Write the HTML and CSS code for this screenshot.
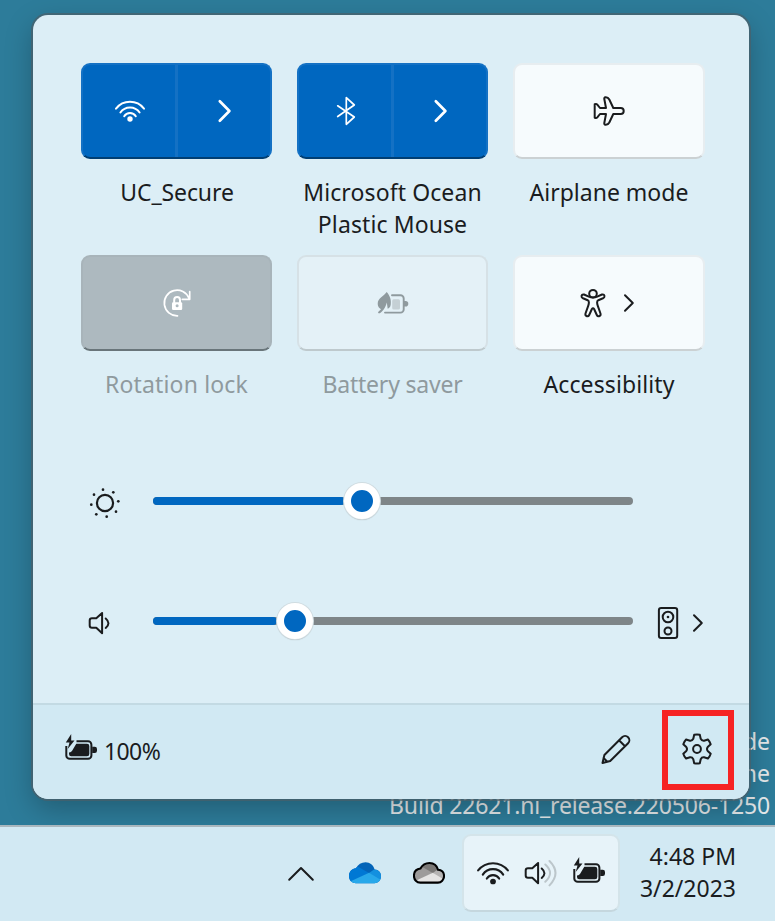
FILE: index.html
```html
<!DOCTYPE html>
<html lang="en">
<head>
<meta charset="utf-8">
<title>Quick settings</title>
<link rel="stylesheet" href="styles.css">
</head>
<body>
<svg width="0" height="0" class="defs" aria-hidden="true">
  <symbol id="wifi" viewBox="0 0 32 24"><g fill="none" stroke="currentColor" stroke-width="2" stroke-linecap="round"><path d="M2 9.6a17.8 17.8 0 0 1 28 0"/><path d="M6.400 13.500a11.600 11.600 0 0 1 19.200 0"/><path d="M10.200 17.200a6.900 6.900 0 0 1 11.600 0"/></g><circle cx="16" cy="20" r="2.700" fill="currentColor"/></symbol>
  <symbol id="battery" viewBox="0 0 34 32"><path d="M12.500 8.300h11.500a3.400 3.400 0 0 1 3.400 3.400v10.700a3.400 3.400 0 0 1-3.400 3.400H5.700a3.400 3.400 0 0 1-3.400-3.400V13" fill="none" stroke="currentColor" stroke-width="2"/><path d="M12.300 10.700H23a2.300 2.300 0 0 1 2.300 2.300v8a2.300 2.300 0 0 1-2.300 2.300H7.200a2.300 2.300 0 0 1-2.200-2.300v-1.500q2.800-.2 4.300-3.700zM7.200 1L1.800 9.600h3.700L3.700 16l6.800-8.600H7.200zM28.200 13.800h2.600a2.200 2.200 0 0 1 2.200 2.200v1.800a2.200 2.200 0 0 1-2.200 2.200h-2.600z" fill="currentColor"/></symbol>
</svg>
<main class="desktop">
  <div class="watermark"><span>de</span><span>ne</span><span class="build">Build 22621.ni_release.220506-1250</span></div>
  <section class="panel">
    <div class="content">
      <div class="tiles">
        <div class="item">
          <div class="tile split"><span><svg width="32" height="24"><use href="#wifi"/></svg></span><span><svg class="bold-chevron" width="16" height="24" viewBox="0 0 16 24"><path d="M3.800 2.300L13.400 12l-9.600 9.700"/></svg></span></div>
          <p class="t-wifi">UC_Secure</p>
        </div>
        <div class="item">
          <div class="tile split"><span><svg class="line thin" width="32" height="32" viewBox="0 0 32 32"><path d="M7.700 10.800L24.300 22l-8 7.300V2.700l8 7.300L7.700 21.500"/></svg></span><span><svg class="bold-chevron" width="16" height="24" viewBox="0 0 16 24"><path d="M3.800 2.300L13.400 12l-9.600 9.700"/></svg></span></div>
          <p class="t-bt">Microsoft Ocean<br>Plastic Mouse</p>
        </div>
        <div class="item">
          <div class="tile light"><svg class="line plane" width="34" height="32" viewBox="0 0 34 32"><path d="M28.700 13a3 3 0 0 1 0 6h-7.400l-4 8.500q-1.300 2.500-3.800 2.300-1.500-.3-1.200-1.800l1.700-9H8l-2.700 3.400q-.8.900-2.600.4V9.200q1.800-.5 2.600.4L8 13h6l-1.700-9q-.3-1.500 1.200-1.800 2.500-.2 3.800 2.300l4 8.500z"/></svg></div>
          <p class="t-air">Airplane mode</p>
        </div>
        <div class="item disabled">
          <div class="tile locked"><svg class="line" width="32" height="32" viewBox="0 0 32 32"><path d="M16.500 28.800A12.800 12.800 0 1 1 28 11.300M21.300 12.300h7.400V4.700" stroke-width="1.700"/><path d="M13.200 15.500V13a2.900 2.900 0 0 1 5.800 0v2.500"/><rect x="11" y="15.300" width="10.200" height="7.700" rx="1.200" fill="#fff" stroke="none"/><circle cx="16.100" cy="18.800" r="1.500" fill="#adb9bf" stroke="none"/></svg></div>
          <p class="t-rot">Rotation lock</p>
        </div>
        <div class="item disabled">
          <div class="tile faint"><svg width="32" height="32" viewBox="0 0 32 32"><path d="M15 8.200h8.500a3.200 3.200 0 0 1 3.200 3.200v11a3.200 3.200 0 0 1-3.200 3.200H8" fill="none" stroke="#8f9a9e" stroke-width="1.900" stroke-linecap="round"/><rect x="15.200" y="12.300" width="7.800" height="10.200" rx="1.500" fill="#c5d0d5"/><path d="M27 14h1.500a2.800 2.800 0 0 1 0 5.600H27z" fill="#8f9a9e"/><path d="M9.700 5C6.500 9.700.600 10.700.700 17c.1 2.500 1.500 4.300 3.300 5.200L.900 25.200l1 1.400C5.500 25 8.500 21 9.800 15.500l.9 6.300c1.300-.3 2.600-1.500 3-4C14.500 12.500 12.700 8.500 9.700 5z" fill="#8f9a9e"/></svg></div>
          <p class="t-bat">Battery saver</p>
        </div>
        <div class="item">
          <div class="tile light access"><svg class="line" width="32" height="32" viewBox="0 0 32 32"><circle cx="16" cy="6.700" r="3.800"/><path d="M11.800 9.700L7 7.500Q5 7 4.500 9q-.2 1.500 1.500 2.300l4.700 1.900q1.200.6 1.200 2.300-.1 1.800-.7 3.400L8.500 26.500q-.5 2 1.200 2.700 1.800.4 2.500-1.200l2.700-6q1.100-1.700 2.200 0l2.700 6q.7 1.600 2.500 1.200 1.700-.7 1.200-2.700l-2.700-7.600q-.6-1.600-.7-3.400 0-1.700 1.200-2.300l4.700-1.900q1.700-.8 1.500-2.300-.5-2-2.500-1.500l-4.800 2.200q-4.200 1.800-8.400 0z"/></svg><svg class="line" width="12" height="20" viewBox="0 0 12 20"><path d="M2 2.300L9.800 10 2 17.700"/></svg></div>
          <p class="t-acc">Accessibility</p>
        </div>
      </div>
      <div class="slider-row">
        <svg class="line" width="32" height="32" viewBox="0 0 32 32"><circle cx="16" cy="16" r="8.100" stroke-width="2.200"/><g fill="#1a1c1e" stroke="none"><circle cx="14" cy="2.700" r="1.350"/><circle cx="24.300" cy="5.300" r="1.350"/><circle cx="29.300" cy="14.300" r="1.350"/><circle cx="27" cy="24.700" r="1.350"/><circle cx="17.700" cy="29.700" r="1.350"/><circle cx="7.300" cy="27.300" r="1.350"/><circle cx="2.300" cy="17.700" r="1.350"/><circle cx="5" cy="7.700" r="1.350"/></g></svg>
        <div class="track brightness"><div class="fill"></div><div class="thumb"></div></div>
      </div>
      <div class="slider-row volume-row">
        <svg class="line" width="32" height="32" viewBox="0 0 32 32"><path d="M15.100 6v20.200l-5.800-5.400H5q-2.300 0-2.300-2.300v-5q0-2.300 2.300-2.300h4.300zM18.700 11.500q5.500 4.700 0 9.400"/></svg>
        <div class="track volume"><div class="fill"></div><div class="thumb"></div></div>
        <svg class="line device" width="24" height="34" viewBox="0 0 24 34"><rect x="2.900" y="2" width="18.300" height="30" rx="2.300"/><circle cx="12" cy="11" r="5.300"/><circle cx="12" cy="11" r="1.300" fill="#1a1c1e" stroke="none"/><circle cx="12" cy="25" r="3.500"/></svg>
        <svg class="line next" width="12" height="20" viewBox="0 0 12 20"><path d="M2 2.300L9.800 10 2 17.700"/></svg>
      </div>
    </div>
    <footer>
      <div class="charge"><svg width="34" height="32"><use href="#battery"/></svg><span>100%</span></div>
      <svg class="line pencil" width="32" height="32" viewBox="0 0 32 32"><path d="M2.500 30l1.900-8L22.100 4.200a4.200 4.200 0 0 1 6 6L10.200 28zM19 7.200l6 6M3.600 25l3.700 3.700"/></svg>
      <div class="settings"><svg class="line" width="32" height="32" viewBox="0 0 32 32"><path d="M12.300 5.800l.9-4q2.800-.6 5.600 0l.9 4q1.100 2.200 3.300 1.900l3.900-1.200q2 2.100 2.800 4.800l-3 2.800q-1.400 1.900 0 3.800l3 2.800q-.8 2.700-2.800 4.800L23 24.300q-2.200-.3-3.300 1.900l-.9 4q-2.800.6-5.600 0l-.9-4Q11.200 24 9 24.300l-3.900 1.200q-2-2.100-2.800-4.800l3-2.800q1.400-1.900 0-3.800l-3-2.800q.8-2.700 2.800-4.800L9 7.700q2.200.3 3.300-1.900z"/><circle cx="16" cy="16" r="3.900"/></svg></div>
    </footer>
  </section>
</main>
<nav class="taskbar">
  <svg class="line up" width="28" height="18" viewBox="0 0 28 18"><path d="M2.200 14.800L14 3l11.800 11.800"/></svg>
  <svg class="cloud" width="32" height="22" viewBox="0 0 32 22"><clipPath id="cl"><path id="cp" d="M6.800 21.200C3 21.200 0 18.300 0 14c0-4.500 3-7.200 6.900-7.700C9 2.300 12.500.3 16.500.3c4.500 0 8 3 9.100 7.200 3.900.1 6.400 2.900 6.400 6.700 0 4-3 7-6.500 7z"/></clipPath><g clip-path="url(#cl)"><path d="M0 0h32v22H0z" fill="#0364b8"/><path d="M0 4l9.500 1L20 11 3 19H0z" fill="#0078d4"/><path d="M20 11l5-3.500L32 5v14h-3z" fill="#1490df"/><path d="M0 20l20-9.200L32 18v4H0z" fill="#28a8ea"/></g></svg>
  <svg class="cloud gray" width="32" height="24" viewBox="-1 -1 34 24"><g clip-path="url(#cl)"><path d="M0 0h32v22H0z" fill="#7a7876"/><path d="M0 4l9.500 1L20 11 3 19H0z" fill="#9d9b9a"/><path d="M20 11l5-3.500L32 5v14h-3z" fill="#b5b3b2"/><path d="M0 20l20-9.200L32 18v4H0z" fill="#e4e3e2"/></g><use href="#cp" fill="none" stroke="#000" stroke-width="2.200"/></svg>
  <div class="tray"><svg class="w" width="34" height="26"><use href="#wifi"/></svg><svg class="line s" width="36" height="32" viewBox="0 0 36 32"><path d="M22.300 7.500q9.500 8.500 0 17.200M26.500 4q12 12 0 24.400" stroke="#bcc6cb"/><path d="M15.100 6v20.200l-5.800-5.400H5q-2.300 0-2.300-2.300v-5q0-2.300 2.300-2.300h4.300zM18.700 11.500q5.500 4.700 0 9.400"/></svg><svg width="34" height="32" class="b"><use href="#battery"/></svg></div>
  <div class="clock"><span class="time">4:48 PM</span><span class="date">3/2/2023</span></div>
</nav>
</body>
</html>
```
FILE: styles.css
```css
* { box-sizing: border-box; }
body {
  margin: 0;
  width: 775px;
  height: 921px;
  overflow: hidden;
  font: 23px/32px "Noto Sans", "Open Sans", sans-serif;
  color: #1a1c1e;
}
svg { display: block; flex: none; }
.defs { position: absolute; }
.line { fill: none; stroke: currentColor; stroke-width: 2; stroke-linecap: round; stroke-linejoin: round; }
.thin { stroke-width: 1.7; }
.desktop {
  position: relative;
  height: 825px;
  padding: 15px 0 0 33px;
  background: #2d7c9a;
  overflow: hidden;
}
.watermark {
  position: absolute;
  right: 5px;
  top: 725px;
  display: flex;
  flex-direction: column;
  align-items: flex-end;
  color: #e3e8ea;
  white-space: nowrap;
}
.build { letter-spacing: -.16px; }
.panel {
  position: relative;
  width: 716px;
  height: 784px;
  border-radius: 15px;
  background: #dceef6;
  box-shadow: 0 0 0 2px rgba(75, 95, 105, .7), 0 10px 28px rgba(0, 0, 0, .25);
  overflow: hidden;
  display: flex;
  flex-direction: column;
}
.content { height: 688px; padding: 48px 43px 0 48px; }
.tiles {
  display: grid;
  grid-template-columns: 191px 191px 192px;
  grid-template-rows: 192px 192px;
  column-gap: 25px;
}
.item { text-align: center; }
.item p { margin: 17px -20px 0; white-space: nowrap; }
.item .t-wifi { letter-spacing: -.1px; padding-left: 1px; }
.t-bt { letter-spacing: .1px; }
.t-rot { letter-spacing: .15px; }
.t-bat { letter-spacing: -.2px; }
.t-acc { letter-spacing: .1px; }
.disabled { color: #8f9a9e; }
.tile {
  height: 96px;
  border-radius: 9px;
  display: flex;
  align-items: center;
  justify-content: center;
}
.split {
  background: #0067c0;
  color: #fff;
  border: 2px solid #1471c4;
  border-bottom-color: #003e73;
}
.split span {
  height: 100%;
  display: flex;
  align-items: center;
  justify-content: center;
}
.split span:first-child { width: 95px; padding-left: 1px; border-right: 3px solid #1471c4; }
.split span:last-child { flex: 1; }
.bold-chevron { fill: none; stroke: #fff; stroke-width: 2.700; stroke-linecap: round; stroke-linejoin: round; }
.light { background: #f6fbfd; border: 2px solid #e7edf0; border-bottom-color: #cbd1d3; }
.plane { margin-left: -1px; }
.locked { background: #adb9bf; color: #fff; border: 2px solid #a8b4ba; border-bottom-color: #69757a; }
.faint { background: #e4f1f7; border: 2px solid #d6e1e6; border-bottom-color: #bec9cd; }
.access { gap: 14px; padding-right: 6px; }
.slider-row { height: 120px; padding-left: 8px; display: flex; align-items: center; }
.slider-row > svg:first-child { margin-top: 4px; }
.tiles + .slider-row { margin-top: -6px; }
.volume-row > svg:first-child { margin-left: -2px; }
.track {
  position: relative;
  width: 480px;
  height: 8px;
  margin-left: 32px;
  border-radius: 4px;
  background: #7e8588;
}
.volume { margin-left: 34px; }
.fill { height: 8px; border-radius: 4px; background: #0067c0; }
.brightness .fill { width: 192px; }
.volume .fill { width: 124px; }
.thumb {
  position: absolute;
  top: -14px;
  width: 36px;
  height: 36px;
  border-radius: 50%;
  border: 7.500px solid #fff;
  background: #0067c0;
  box-shadow: 0 0 0 1px #d0dce1, 0 1px 1px 0 #a7b2b6;
}
.brightness .thumb { left: 191px; }
.volume .thumb { left: 124px; }
.device { margin: 4px 0 0 23px; }
.next { margin: 4px 0 0 12px; }
footer {
  height: 96px;
  padding: 0 15px 0 31px;
  border-top: 2px solid #c3dae3;
  background: #d1e9f3;
  display: flex;
  align-items: center;
}
.charge { display: flex; align-items: center; gap: 6px; margin-top: -3px; letter-spacing: -.6px; }
.charge svg { margin-top: -3px; }
.pencil { margin: -6px 30px 0 auto; }
.settings {
  width: 72px;
  height: 80px;
  border: 6px solid #f62323;
  display: flex;
  align-items: center;
  justify-content: center;
  padding: 0 2px 2px 0;
  margin-top: -5px;
}
.taskbar {
  height: 96px;
  border-top: 2px solid #aab7be;
  background: #d2e9f3;
  display: flex;
  align-items: center;
}
.up { margin-left: 287px; }
.cloud { margin-left: 34px; margin-top: -3px; }
.gray { margin-left: 32px; }
.tray {
  width: 158px;
  height: 78px;
  margin: -3px 0 0 17px;
  border: 2px solid #d4e4ea;
  border-bottom-color: #c5d7de;
  border-radius: 9px;
  background: #e7f3f9;
  display: flex;
  align-items: center;
  padding-left: 12px;
}
.s { margin-left: 13px; }
.b { margin: -2px 0 0 13px; }
.clock {
  margin: -4px 39px 0 auto;
  display: flex;
  flex-direction: column;
  align-items: flex-end;
  white-space: nowrap;
}
```
